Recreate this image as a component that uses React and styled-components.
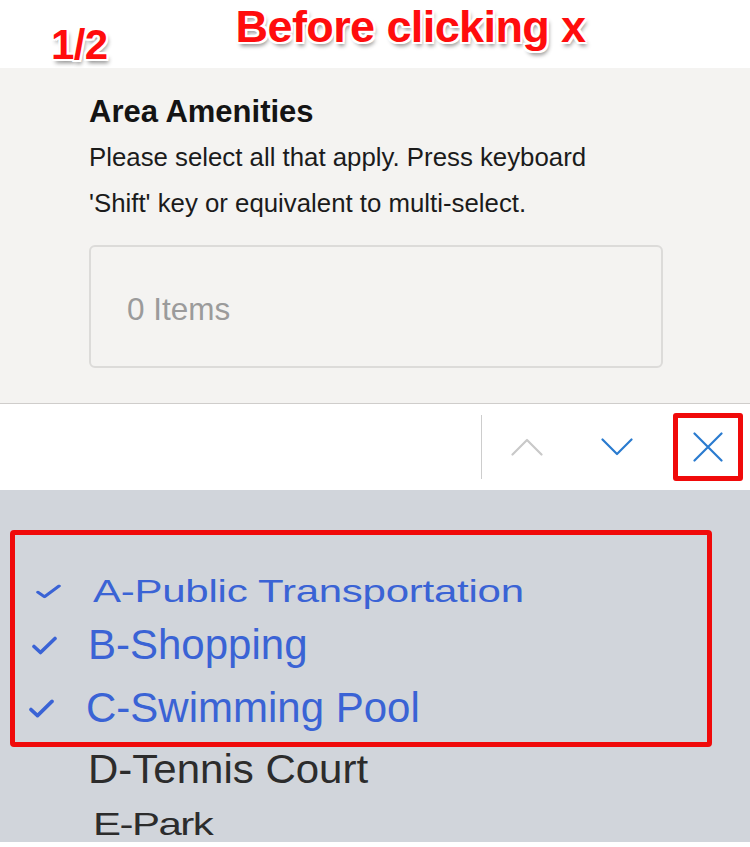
import React from "react";
import styled, { createGlobalStyle } from "styled-components";

const Global = createGlobalStyle`
  html, body { margin: 0; padding: 0; background: #ffffff; }
  body { width: 750px; height: 847px; overflow: hidden; font-family: "Liberation Sans", Arial, sans-serif; }
`;

const Page = styled.div`
  width: 750px;
  height: 847px;
  display: flex;
  flex-direction: column;
  background: #ffffff;
`;

const Header = styled.header`
  height: 68px;
  display: flex;
  align-items: flex-start;
  padding-left: 51px;
  gap: 128px;
  box-sizing: border-box;
`;

const Annotation = styled.div`
  font-family: "Liberation Sans", Arial, sans-serif;
  font-weight: 700;
  font-size: ${(p) => p.$size}px;
  line-height: 42px;
  color: #ff0d0d;
  letter-spacing: -0.6px;
  margin-top: ${(p) => p.$top}px;
  text-shadow: -2px -2px 0 #fff, 2px -2px 0 #fff, -2px 2px 0 #fff, 2px 2px 0 #fff,
    0 2px 0 #fff, 2px 0 0 #fff, -2px 0 0 #fff, 0 -2px 0 #fff,
    2px 4px 4px rgba(0, 0, 0, 0.45);
`;

const Panel = styled.section`
  background: #f4f3f1;
  padding: 26px 0 35px 89px;
  border-bottom: 1px solid #cfcdcb;
  display: flex;
  flex-direction: column;
`;

const Heading = styled.h2`
  margin: 0;
  font-size: 31px;
  line-height: 36px;
  font-weight: 700;
  color: #141414;
`;

const Help = styled.p`
  margin: 4px 0 0;
  font-size: 25.8px;
  line-height: 46px;
  color: #1b1b1b;
`;

const ItemsBox = styled.div`
  margin-top: 19px;
  width: 574px;
  height: 123px;
  box-sizing: border-box;
  border: 2px solid #dcdbd9;
  border-radius: 6px;
  display: flex;
  align-items: center;
  padding: 6px 0 0 36px;
  font-size: 31.5px;
  color: #9b9b9b;
`;

const Toolbar = styled.div`
  height: 86px;
  display: flex;
  align-items: center;
  justify-content: flex-end;
  padding-right: 7px;
  background: #ffffff;
`;

const Divider = styled.div`
  width: 1px;
  height: 64px;
  background: #cdcdcd;
`;

const NavButton = styled.button`
  width: 90px;
  height: 68px;
  border: none;
  background: transparent;
  display: flex;
  align-items: center;
  justify-content: center;
  padding: 0;
  color: ${(p) => (p.$disabled ? "#c9c9c9" : "#2a7bcf")};
`;

const CloseButton = styled.button`
  margin-left: 11px;
  width: 70px;
  height: 68px;
  box-sizing: border-box;
  border: 5px solid #f00a0a;
  border-radius: 3px;
  background: #ffffff;
  display: flex;
  align-items: center;
  justify-content: center;
  padding: 0;
  color: #2a7bcf;
`;

const Picker = styled.div`
  position: relative;
  height: 352px;
  background: #d1d5db;
  overflow: hidden;
  padding-top: 74px;
  box-sizing: border-box;
`;

const Highlight = styled.div`
  position: absolute;
  left: 10px;
  top: 40px;
  width: 702px;
  height: 217px;
  box-sizing: border-box;
  border: 5px solid #f00a0a;
  border-radius: 4px;
  pointer-events: none;
`;

const Row = styled.div`
  height: ${(p) => p.$h}px;
  display: flex;
  align-items: center;
  transform: scaleY(${(p) => p.$scale});
  font-size: 42px;
  line-height: 48px;
  color: ${(p) => (p.$checked ? "#3a63d5" : "#2c2c2c")};
  letter-spacing: ${(p) => p.$spacing}px;
`;

const CheckCell = styled.span`
  width: ${(p) => 88 + p.$indent}px;
  flex: none;
  display: flex;
  align-items: center;
  padding-left: ${(p) => 32 + p.$shift}px;
  box-sizing: border-box;
  color: #3a63d5;
`;

const Check = () => (
  <svg width="25" height="19" viewBox="0 0 25 19" fill="none">
    <path d="M2 10.5 L8.5 16.5 L23 2.5" stroke="currentColor" strokeWidth="3.6" strokeLinecap="round" strokeLinejoin="round" />
  </svg>
);

const Chevron = ({ up }) => (
  <svg width="32" height="18" viewBox="0 0 32 18" fill="none">
    <path d={up ? "M1.5 16.5 L16 2 L30.5 16.5" : "M1.5 1.5 L16 16 L30.5 1.5"} stroke="currentColor" strokeWidth="2.2" strokeLinecap="round" strokeLinejoin="round" />
  </svg>
);

const XIcon = () => (
  <svg width="30" height="30" viewBox="0 0 30 30" fill="none">
    <path d="M1.5 1.5 L28.5 28.5 M28.5 1.5 L1.5 28.5" stroke="currentColor" strokeWidth="2.2" strokeLinecap="round" />
  </svg>
);

const items = [
  { label: "A-Public Transportation", checked: true, scale: 0.76, h: 54, indent: 5, shift: 4, spacing: -0.25 },
  { label: "B-Shopping", checked: true, scale: 1, h: 54, indent: 0, shift: 0, spacing: 0 },
  { label: "C-Swimming Pool", checked: true, scale: 1.02, h: 72, indent: -2, shift: -3, spacing: 0 },
  { label: "D-Tennis Court", checked: false, scale: 0.98, h: 50, indent: 0, shift: 0, spacing: 0 },
  { label: "E-Park", checked: false, scale: 0.76, h: 60, indent: 5, shift: 0, spacing: -1.5 },
];

export default function App() {
  return (
    <Page>
      <Global />
      <Header>
        <Annotation $top={24} $size={42}>1/2</Annotation>
        <Annotation $top={6} $size={45}>Before clicking x</Annotation>
      </Header>
      <Panel>
        <Heading>Area Amenities</Heading>
        <Help>
          Please select all that apply. Press keyboard
          <br />
          'Shift' key or equivalent to multi-select.
        </Help>
        <ItemsBox>0 Items</ItemsBox>
      </Panel>
      <Toolbar>
        <Divider />
        <NavButton $disabled aria-label="Previous">
          <Chevron up />
        </NavButton>
        <NavButton aria-label="Next">
          <Chevron />
        </NavButton>
        <CloseButton aria-label="Close">
          <XIcon />
        </CloseButton>
      </Toolbar>
      <Picker>
        {items.map((it) => (
          <Row key={it.label} $h={it.h} $scale={it.scale} $checked={it.checked} $spacing={it.spacing}>
            <CheckCell $indent={it.indent} $shift={it.shift}>
              {it.checked && <Check />}
            </CheckCell>
            {it.label}
          </Row>
        ))}
        <Highlight />
      </Picker>
    </Page>
  );
}
